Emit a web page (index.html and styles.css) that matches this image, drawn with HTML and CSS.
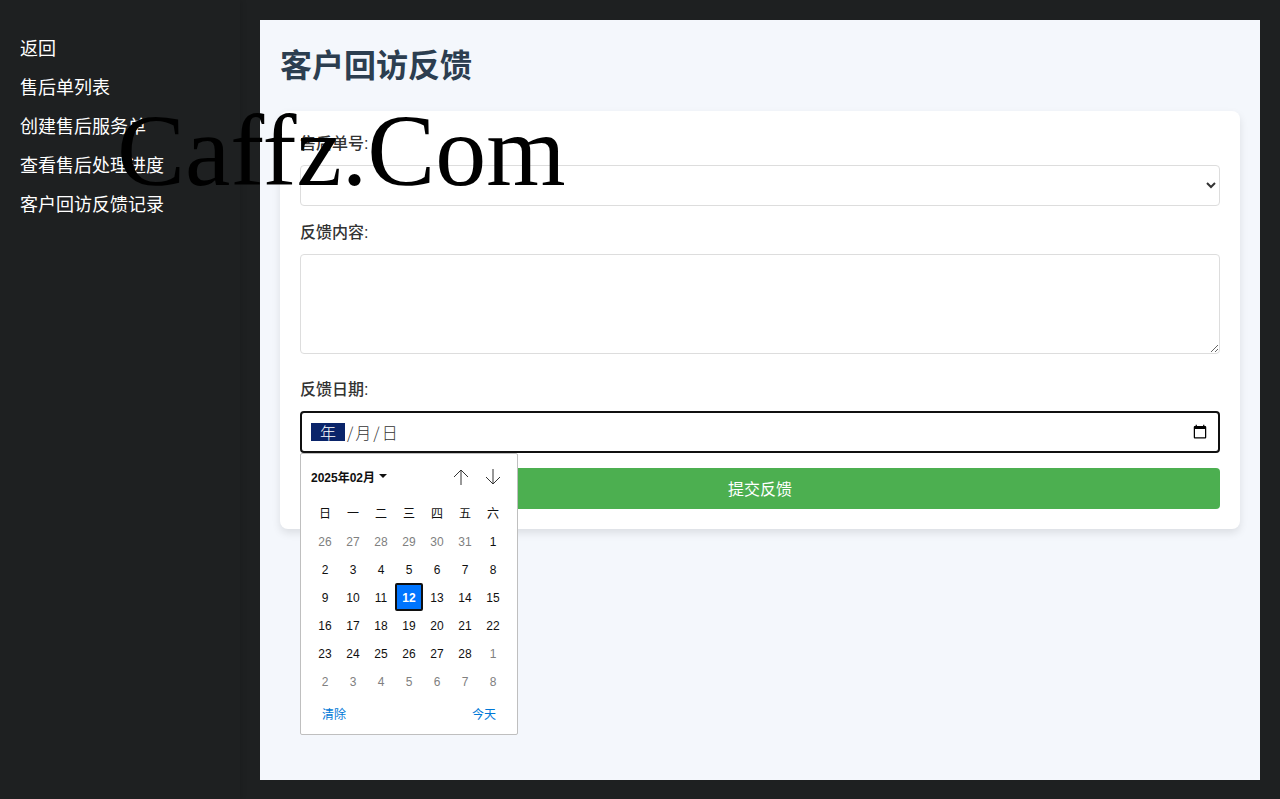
FILE: index.html
```html
<!DOCTYPE html>
<html lang="zh-CN">
<head>
    <meta charset="UTF-8">
    <meta name="viewport" content="width=device-width, initial-scale=1.0">
    <title>客户回访反馈</title>
    <link rel="stylesheet" href="styles.css">
</head>
<body>
    <nav class="sidebar">
        <a href="#">返回</a>
        <a href="#">售后单列表</a>
        <a href="#">创建售后服务单</a>
        <a href="#">查看售后处理进度</a>
        <a href="#">客户回访反馈记录</a>
    </nav>

    <main class="content">
        <h1>客户回访反馈</h1>
        <form class="feedback-form" autocomplete="off">
            <label for="orderId">售后单号:</label>
            <select id="orderId" name="orderId"></select>

            <label for="feedback">反馈内容:</label>
            <textarea id="feedback" name="feedback"></textarea>

            <label for="feedbackDate">反馈日期:</label>
            <div class="date-field">
                <input type="date" id="feedbackDate" name="feedbackDate">
                <div class="date-hint"><span class="active">年</span>/<span>月</span>/<span>日</span></div>

                <div class="calendar">
                    <div class="calendar-header">
                        <button type="button" class="month">2025年02月<span class="caret"></span></button>
                        <button type="button" class="arrow" aria-label="上个月">
                            <svg width="16" height="16" viewBox="0 0 16 16"><path d="M8 16V1M1 8l7-7 7 7"/></svg>
                        </button>
                        <button type="button" class="arrow" aria-label="下个月">
                            <svg width="16" height="16" viewBox="0 0 16 16"><path d="M8 0v15M1 8l7 7 7-7"/></svg>
                        </button>
                    </div>
                    <table>
                        <thead>
                            <tr><th>日</th><th>一</th><th>二</th><th>三</th><th>四</th><th>五</th><th>六</th></tr>
                        </thead>
                        <tbody>
                            <tr><td class="other">26</td><td class="other">27</td><td class="other">28</td><td class="other">29</td><td class="other">30</td><td class="other">31</td><td>1</td></tr>
                            <tr><td>2</td><td>3</td><td>4</td><td>5</td><td>6</td><td>7</td><td>8</td></tr>
                            <tr><td>9</td><td>10</td><td>11</td><td class="today">12</td><td>13</td><td>14</td><td>15</td></tr>
                            <tr><td>16</td><td>17</td><td>18</td><td>19</td><td>20</td><td>21</td><td>22</td></tr>
                            <tr><td>23</td><td>24</td><td>25</td><td>26</td><td>27</td><td>28</td><td class="other">1</td></tr>
                            <tr><td class="other">2</td><td class="other">3</td><td class="other">4</td><td class="other">5</td><td class="other">6</td><td class="other">7</td><td class="other">8</td></tr>
                        </tbody>
                    </table>
                    <div class="calendar-footer">
                        <button type="button">清除</button>
                        <button type="button">今天</button>
                    </div>
                </div>
            </div>

            <button type="submit" class="submit-btn">提交反馈</button>
        </form>
    </main>

    <div class="watermark">Caffz.Com</div>
</body>
</html>
```
FILE: styles.css
```css
* {
    box-sizing: border-box;
}
body {
    margin: 0;
    min-height: 100vh;
    display: flex;
    background: #1e2021;
    color: #333;
    font-family: "Liberation Sans", "Noto Sans CJK SC", sans-serif;
}
.sidebar {
    flex: 0 0 240px;
    padding: 37px 20px;
    display: flex;
    flex-direction: column;
    gap: 15px;
    box-shadow: 2px 0 5px rgba(0, 0, 0, 0.1);
}
.sidebar a {
    color: #fff;
    font-size: 18px;
    line-height: 24px;
    text-decoration: none;
}
.content {
    flex: 1;
    margin: 20px 20px 19px;
    padding: 20px;
    background: #f4f7fc;
}
h1 {
    margin: 0 0 18px;
    color: #2c3e50;
    font-size: 32px;
    line-height: 53px;
}
.feedback-form {
    padding: 20px;
    background: #fff;
    border-radius: 8px;
    box-shadow: 0 4px 8px rgba(0, 0, 0, 0.1);
}
.feedback-form label {
    display: block;
    margin-bottom: 8px;
    font-size: 16px;
    font-weight: 500;
    line-height: 26px;
}
select, textarea, input {
    display: block;
    width: 100%;
    padding: 8px;
    border: 1px solid #ddd;
    border-radius: 4px;
    background: #fff;
    color: #333;
    font-family: inherit;
    font-size: 16px;
}
select {
    height: 41px;
    padding: 0;
    margin-bottom: 14px;
}
textarea {
    height: 100px;
    margin-bottom: 23px;
    resize: vertical;
}

/* Date field and its drop-down calendar */
.date-field {
    position: relative;
    margin-bottom: 15px;
}
.date-field input {
    height: 42px;
    border: 2px solid #101010;
    padding: 8px;
}
.date-field input::-webkit-datetime-edit {
    color: transparent;
}
.date-hint {
    position: absolute;
    top: 12px;
    left: 11px;
    display: flex;
    gap: 2px;
    font-family: "Noto Sans CJK SC", sans-serif;
    font-size: 16px;
    font-weight: 300;
    line-height: 18px;
    pointer-events: none;
}
.date-hint .active {
    padding: 0 9px;
    background: #0a246a;
    color: #fff;
}
.calendar {
    position: absolute;
    top: 100%;
    left: 0;
    width: 218px;
    padding: 8px 10px 2px;
    border: 1px solid #bfbfbf;
    border-radius: 2px;
    background: #fff;
    color: #101010;
    font-size: 12px;
}
.calendar button {
    padding: 0;
    border: none;
    background: none;
    color: inherit;
    font-family: inherit;
    font-size: 12px;
    cursor: pointer;
}
.calendar-header {
    display: flex;
    gap: 4px;
    height: 30px;
    margin-bottom: 7px;
}
.calendar .month {
    display: flex;
    align-items: center;
    gap: 4px;
    height: 28px;
    margin-right: auto;
    font-weight: bold;
}
.caret {
    border: 4px solid transparent;
    border-top-color: #101010;
    border-bottom: none;
}
.arrow {
    width: 28px;
}
.arrow svg {
    display: block;
    margin: auto;
    fill: none;
    stroke: #333;
}
.calendar table {
    width: 100%;
    table-layout: fixed;
    border-collapse: separate;
    border-spacing: 0;
}
.calendar th, .calendar td {
    height: 28px;
    padding: 1px 0 0;
    line-height: 16px;
    text-align: center;
}
.calendar th {
    font-weight: normal;
}
.calendar .other {
    color: #808080;
}
.calendar .today {
    border: 2px solid #101010;
    border-radius: 2px;
    background: #0075ff;
    color: #fff;
    font-weight: bold;
}
.calendar-footer {
    display: flex;
    justify-content: space-between;
    padding: 10px 11px;
    line-height: 18px;
}
.calendar .calendar-footer button {
    color: #0078d7;
}

.submit-btn {
    display: block;
    width: 100%;
    height: 41px;
    padding: 0 0 2px;
    border: none;
    border-radius: 4px;
    background: #4caf50;
    color: #fff;
    font-family: inherit;
    font-size: 16px;
    cursor: pointer;
}
.watermark {
    position: absolute;
    top: 93px;
    left: 117px;
    color: #000;
    font-family: "Liberation Serif", serif;
    font-size: 102px;
    line-height: 116px;
    pointer-events: none;
}
```
